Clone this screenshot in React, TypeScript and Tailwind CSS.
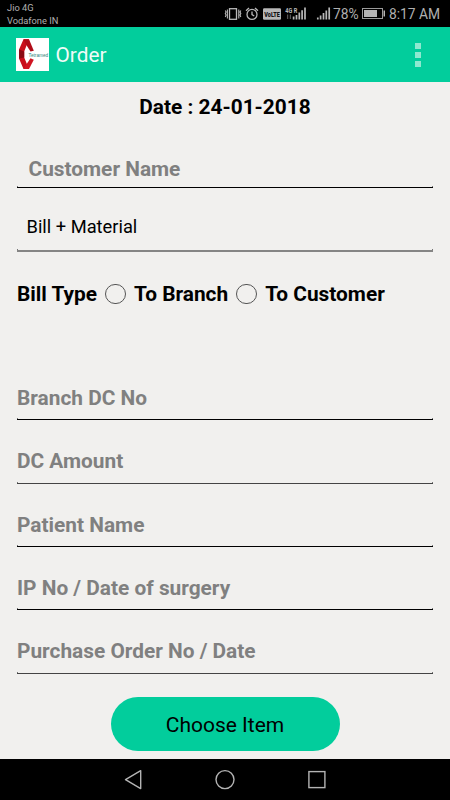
import clsx from "clsx";

const fields = [
  { label: "Branch DC No", height: "h-[63px]", soft: false },
  { label: "DC Amount", height: "h-[64px]", soft: true },
  { label: "Patient Name", height: "h-[63px]", soft: false },
  { label: "IP No / Date of surgery", height: "h-[63px]", soft: false },
  { label: "Purchase Order No / Date", height: "h-[64px]", soft: true },
];

// input underline with the small ticks at both ends
function Underline({ color = "bg-black", thick = false }: { color?: string; thick?: boolean }) {
  return (
    <div className="w-full">
      <div className="flex h-px justify-between">
        <span className="w-px bg-[#777]" />
        <span className="w-px bg-[#777]" />
      </div>
      <div className={clsx("w-full", thick ? "h-[2px]" : "h-px", color)} />
    </div>
  );
}

function StatusIcons() {
  return (
    <svg width="111" height="27" viewBox="222 0 111 27" fill="none" stroke="#b8b8b8" strokeWidth="1.3">
      {/* vibrate */}
      <rect x="229.5" y="8.7" width="7" height="10.6" />
      <path d="M227.4 9.5v9M238.8 9.5v9M225.3 10.5l.8 1.5-.8 1.5.8 1.5-.8 2M240.8 10.5l-.8 1.5.8 1.5-.8 1.5.8 2" strokeWidth="1.1" />
      {/* alarm */}
      <circle cx="252" cy="14.4" r="5" />
      <path d="M252 11.5v3.1l2.2 1.4M246 10.8l3-2.8M258 10.8l-3-2.8" />
      {/* volte */}
      <rect x="263" y="8.3" width="18" height="11.5" rx="1.2" fill="#b8b8b8" stroke="none" />
      <text x="264.3" y="16.9" fill="#111" stroke="none" fontFamily="Roboto, sans-serif" fontWeight="900" fontSize="8" textLength="15.6" lengthAdjust="spacingAndGlyphs">VoLTE</text>
      {/* signals */}
      <text x="285.3" y="12.6" fill="#b8b8b8" stroke="none" fontFamily="Roboto, sans-serif" fontWeight="700" fontSize="7" textLength="12" lengthAdjust="spacingAndGlyphs">4G R</text>
      <path d="M287.6 14.5v4.5M290.4 14.5v4.5" stroke="#555" />
      <path d="M293.6 19.5v-3M296.5 19.5v-4.5M299.3 19.5v-7M302.1 19.5v-9.3M305 19.5v-12" strokeWidth="1.7" />
      <path d="M317.8 19.5v-2M320.6 19.5v-4M323.5 19.5v-6.5M326.3 19.5v-9M329.2 19.5v-12" strokeWidth="1.7" />
    </svg>
  );
}

function StatusBar() {
  return (
    <div className="flex h-[27px] bg-black text-[#b0b0b0]">
      <div className="w-[222px] pt-[2px] pl-[7px] text-[9.3px] leading-[12.5px]">
        <div>Jio 4G</div>
        <div>Vodafone IN</div>
      </div>
      <StatusIcons />
      <span className="w-[28px] text-[13.8px] leading-[28px] whitespace-nowrap">78%</span>
      <svg width="28" height="27" viewBox="361 0 28 27" fill="none">
        <rect x="362.5" y="8.5" width="20" height="10" stroke="#9a9a9a" />
        <rect x="364" y="10" width="13" height="7" fill="#b5b5b5" />
        <rect x="383.5" y="10.5" width="1.5" height="6" fill="#b5b5b5" />
      </svg>
      <span className="text-[13.8px] leading-[29px] whitespace-nowrap">8:17 AM</span>
    </div>
  );
}

function Logo() {
  return (
    <svg width="33" height="33" viewBox="0 0 33 33">
      <rect width="33" height="33" fill="#fff" />
      <path d="M7.5 1.3h5.5L8.2 13.5v6L13 31H7.5L3 20.5v-9z" fill="#c90f1c" />
      <path d="M7.5 1.3H13l4.8 11.5-3.3.8L10 6.5z" fill="#b00c18" />
      <path d="M7.5 31H13l4.8-9.2-3.3-1.6L10 27z" fill="#d01522" />
      <path d="M3 11.5l5.2 2v6L3 20.5z" fill="#8a0a13" />
      <text x="12.6" y="19.3" fill="#2f8577" fontFamily="Liberation Sans, sans-serif" fontSize="4.7">Tetramed</text>
    </svg>
  );
}

function AppBar() {
  return (
    <header className="flex h-[55px] items-center bg-[#02cd9c] pl-4">
      <Logo />
      <h1 className="mt-[3px] ml-[6.5px] flex-1 text-[20.8px] text-[#effcf8]">Order</h1>
      <div className="mr-[29px] flex flex-col gap-[3px]">
        <span className="size-[6px] bg-[#8fe8d0]" />
        <span className="size-[6px] bg-[#8fe8d0]" />
        <span className="size-[6px] bg-[#8fe8d0]" />
      </div>
    </header>
  );
}

function Radio({ label }: { label: string }) {
  return (
    <label className="flex items-center">
      <span className="mr-[8.5px] ml-[8px] size-[20.5px] rounded-full border border-[#555]" />
      <span>{label}</span>
    </label>
  );
}

function NavBar() {
  return (
    <nav className="flex h-[41px] items-center justify-center bg-black">
      <svg width="450" height="41" viewBox="0 759 450 41" fill="none" stroke="#b4b4b4" strokeWidth="1.4">
        <path d="M125.5 779.6L140.7 770.7V788.6Z" strokeLinejoin="round" />
        <circle cx="225" cy="779.6" r="9" />
        <rect x="308.9" y="771.6" width="16" height="16" />
      </svg>
    </nav>
  );
}

export default function App() {
  return (
    <div className="flex h-[800px] w-[450px] flex-col overflow-hidden bg-[#f1f0ee] font-['Roboto',sans-serif]">
      <StatusBar />
      <AppBar />
      <main className="flex flex-1 flex-col px-[17px] text-[20.85px] leading-6 font-bold text-black">
        <div className="flex h-[50px] items-center justify-center">Date : 24-01-2018</div>

        <div className="flex h-[56px] flex-col justify-end">
          <div className="mb-[5px] pl-[11.5px] text-[#808080]">Customer Name</div>
          <Underline />
        </div>
        <div className="flex h-[64px] flex-col justify-end">
          <div className="mb-[10px] pl-[9.5px] text-[18.3px] font-normal">Bill + Material</div>
          <Underline color="bg-[#858584]" thick />
        </div>

        <div className="flex h-[84px] items-center">
          <span>Bill Type</span>
          <Radio label="To Branch" />
          <Radio label="To Customer" />
        </div>

        <div className="mt-[21px]">
          {fields.map((f) => (
            <div key={f.label} className={clsx("flex flex-col justify-end", f.height)}>
              <div className={clsx("text-[#808080]", f.soft ? "mb-[9px]" : "mb-[8px]")}>{f.label}</div>
              <Underline color={f.soft ? "bg-[#444]" : "bg-black"} />
            </div>
          ))}
        </div>

        <button className="mx-auto mt-[23px] h-[54px] w-[229px] rounded-full bg-[#02cd9c] pt-[2px] text-[21px] font-normal">
          Choose Item
        </button>
      </main>
      <NavBar />
    </div>
  );
}
